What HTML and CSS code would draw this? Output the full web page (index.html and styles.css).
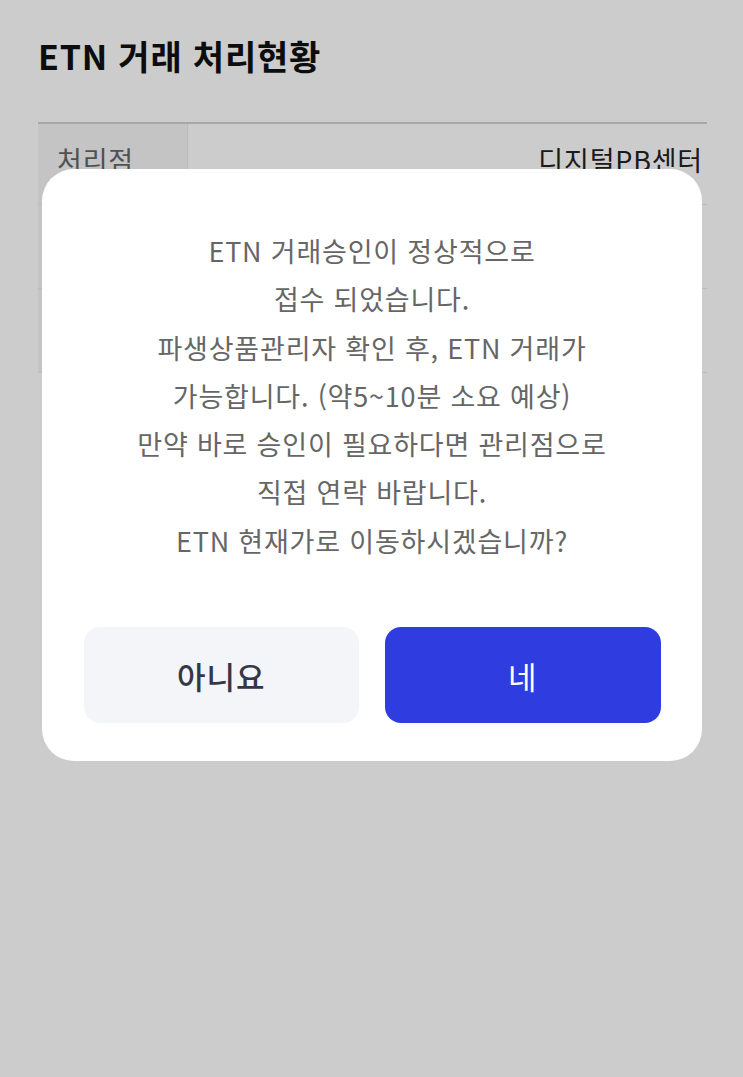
FILE: index.html
```html
<!DOCTYPE html>
<html lang="ko">
	<head>
		<meta charset="UTF-8">
		<title>ETN 거래 처리현황</title>
		<link rel="stylesheet" href="styles.css">
	</head>
	<body>
		<div class="page">
			<h1 class="title">ETN 거래 처리현황</h1>
			<table class="status">
				<tr>
					<th>처리점</th>
					<td>디지털PB센터</td>
				</tr>
				<tr class="tall">
					<th>신청일시</th>
					<td>2023.03.20 09:30</td>
				</tr>
				<tr class="tall">
					<th>처리번호</th>
					<td>20230320-0048</td>
				</tr>
			</table>
		</div>

		<div class="dim">
			<div class="dialog">
				<p class="message">
					ETN 거래승인이 정상적으로<br>
					접수 되었습니다.<br>
					파생상품관리자 확인 후, ETN 거래가<br>
					가능합니다. (약5~10분 소요 예상)<br>
					만약 바로 승인이 필요하다면 관리점으로<br>
					직접 연락 바랍니다.<br>
					ETN 현재가로 이동하시겠습니까?
				</p>
				<div class="buttons">
					<button class="btn btn-no" type="button">아니요</button>
					<button class="btn btn-yes" type="button">네</button>
				</div>
			</div>
		</div>
	</body>
</html>
```

FILE: styles.css
```css
/* 화면 743*1077 */

html, body{margin:0; padding:0;}
body{
	background: #fff;
	font-family: "Noto Sans CJK KR", "Noto Sans", sans-serif;
	color: #111;
}
.page{
	padding: 28px 36px 0 38px;
}
.title{
	margin: 0;
	font-size: 34px;
	font-weight: 700;
	line-height: 56px;
	color: #111;
	letter-spacing: 0.8px;
}
.status{
	width: 100%;
	margin-top: 38px;
	border-collapse: collapse;
	border-top: 2px solid #d3d3d3;
}
.status th, .status td{
	height: 58px;
	padding: 0;
	vertical-align: top;
	font-size: 27px;
	line-height: 27px;
	letter-spacing: 0.8px;
	border-bottom: 1px solid #ececec;
}
.status .tall th, .status .tall td{
	height: 61px;
}
.status th{
	width: 149px;
	padding: 22px 0 0 19px;
	box-sizing: border-box;
	text-align: left;
	font-weight: 400;
	color: #666;
	background: #f5f5f5;
	border-right: 1px solid #e8e8e8;
}
.status td{
	padding: 22px 4px 0 0;
	text-align: right;
	color: #222;
}

/* 팝업 */
.dim{
	position: fixed;
	left: 0;
	top: 0;
	right: 0;
	bottom: 0;
	background: rgba(0, 0, 0, 0.2);
	display: flex;
	justify-content: center;
	align-items: flex-start;
	padding-top: 169px;
}
.dialog{
	width: 660px;
	background: #fff;
	border-radius: 32px;
	padding: 58px 41px 38px 42px;
	box-sizing: border-box;
}
.message{
	margin: 0;
	text-align: center;
	font-size: 27px;
	line-height: 48.3px;
	letter-spacing: 0.8px;
	color: #666;
	font-weight: 400;
}
.buttons{
	display: flex;
	gap: 26px;
	margin-top: 62px;
}
.btn{
	flex: 1;
	height: 96px;
	border: none;
	border-radius: 16px;
	font-family: "Noto Sans CJK KR", "Noto Sans", sans-serif;
	font-size: 31px;
	letter-spacing: 1px;
	cursor: pointer;
}
.btn-no{
	background: #f4f5f9;
	color: #333846;
	font-weight: 500;
}
.btn-yes{
	background: #2f3de0;
	color: #fff;
	font-weight: 400;
}
```
